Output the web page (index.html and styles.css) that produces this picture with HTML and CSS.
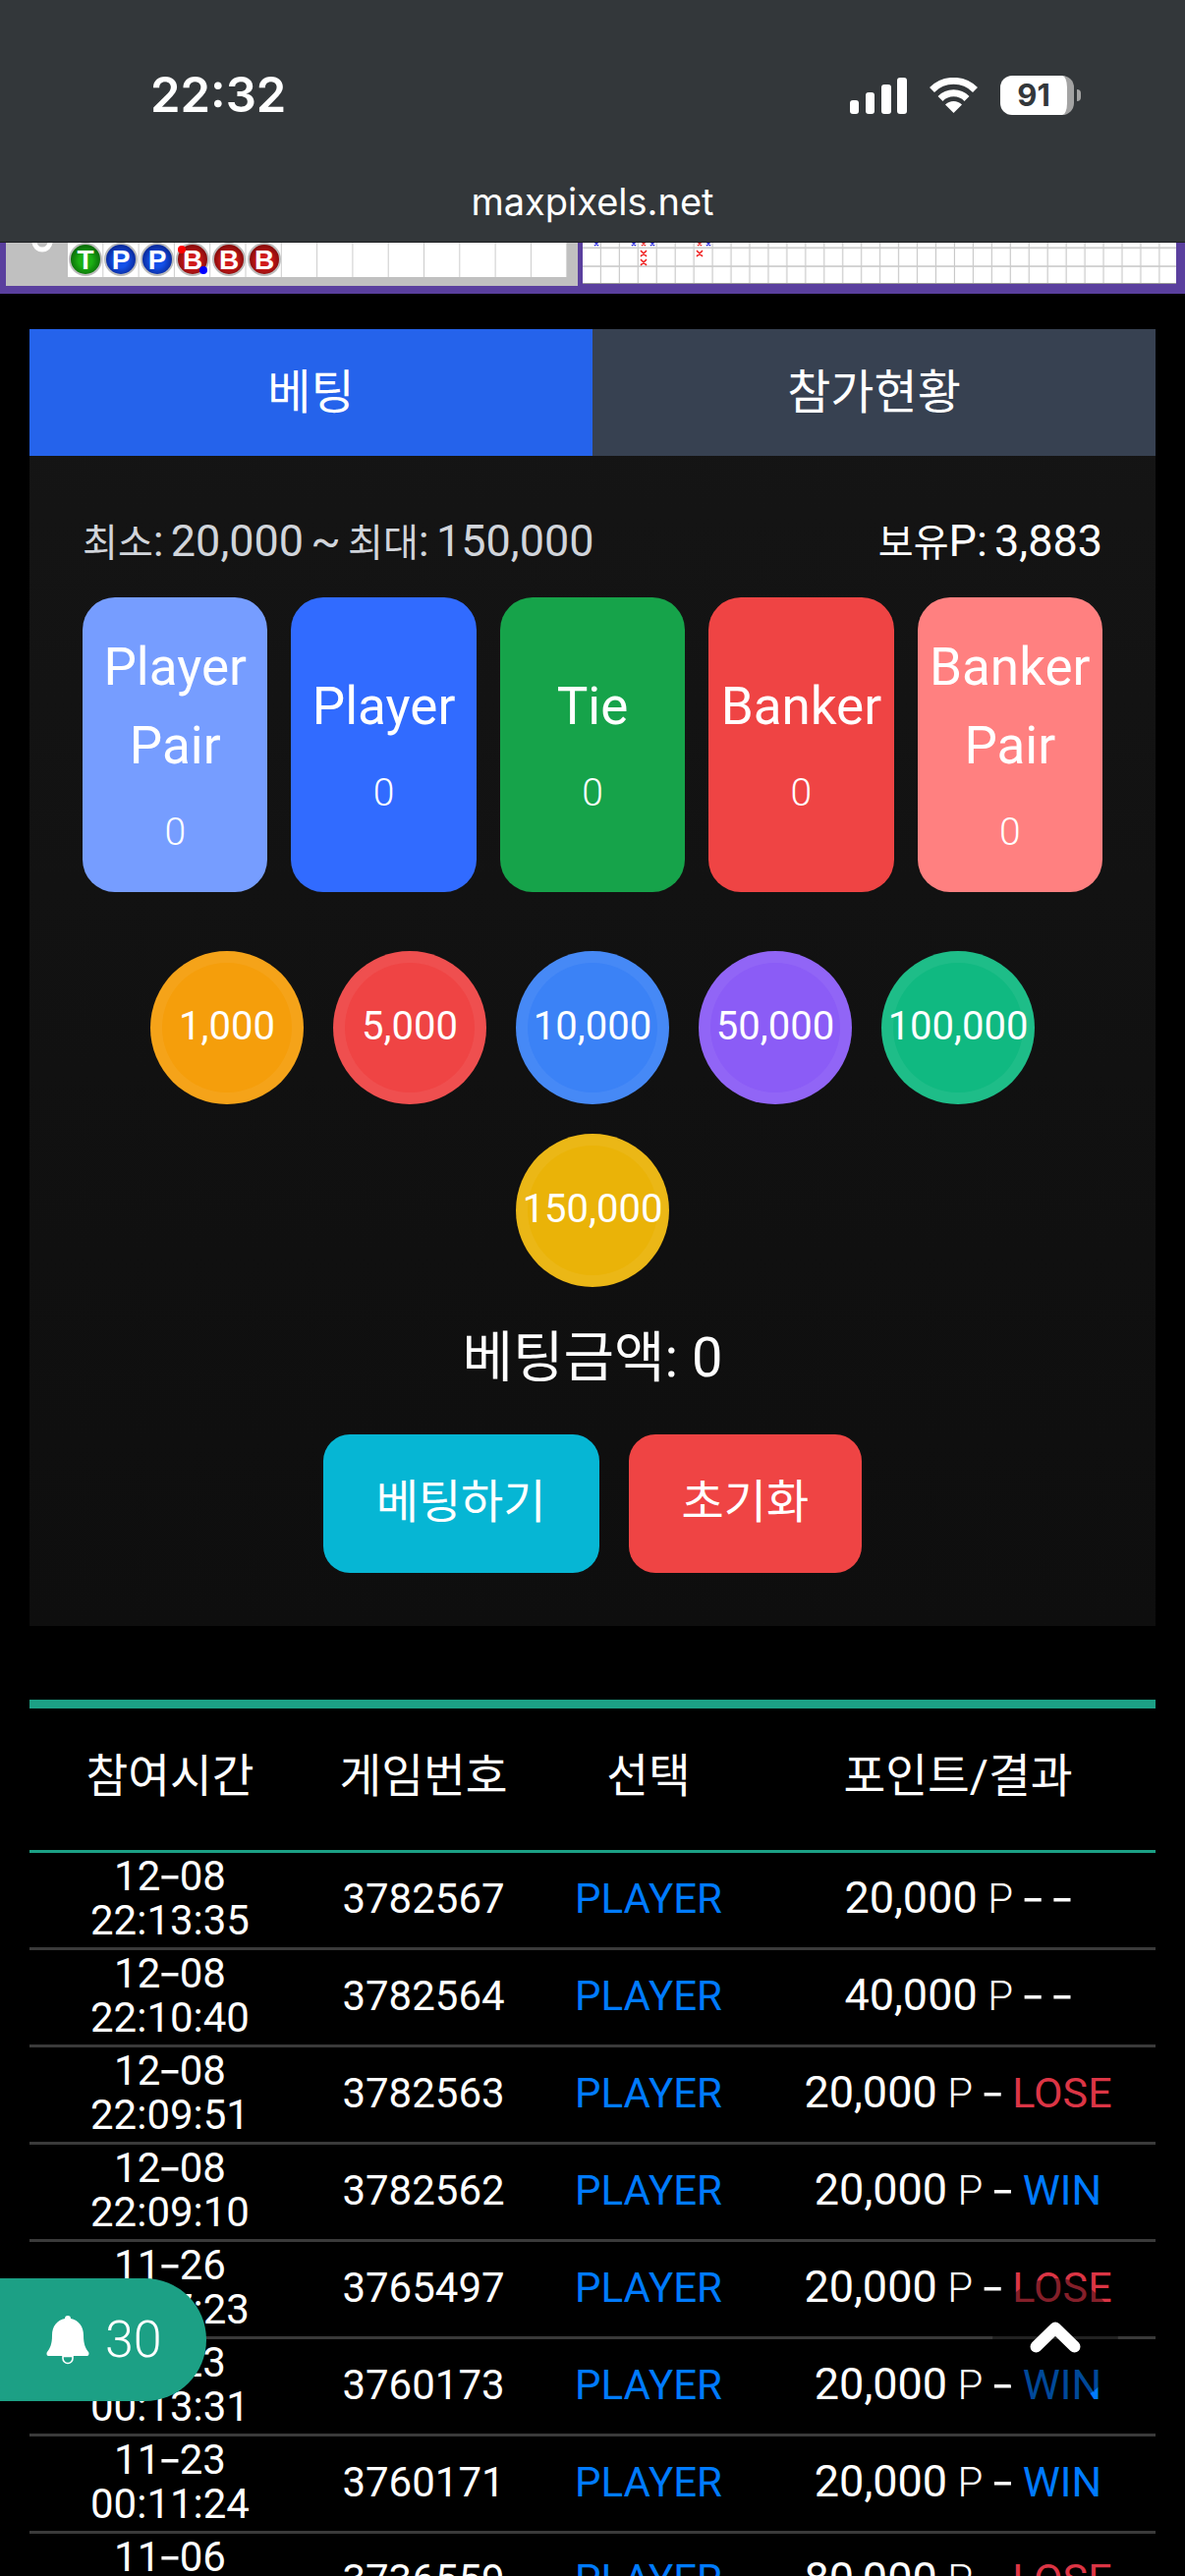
FILE: index.html
```html
<!DOCTYPE html>
<html lang="ko">
<head>
    <meta charset="UTF-8">
    <title>maxpixels.net</title>
    <link rel="stylesheet" href="styles.css">
</head>
<body>

    <div class="status">
        <div class="status-top">
            <span class="clock">22:32</span>
            <div class="status-icons">
                <svg class="signal" width="58" height="37" viewBox="0 0 58 37">
                    <rect x="0" y="23" width="9" height="14" rx="3" fill="#fff"/>
                    <rect x="16" y="15" width="9" height="22" rx="3" fill="#fff"/>
                    <rect x="32" y="7" width="10" height="30" rx="3" fill="#fff"/>
                    <rect x="48" y="0" width="10" height="37" rx="3" fill="#fff"/>
                </svg>
                <svg class="wifi" width="51" height="36" viewBox="0 0 51 36">
                    <path d="M3.5 12.5A31 31 0 0 1 47.5 12.5" fill="none" stroke="#fff" stroke-width="7"/>
                    <path d="M12 21.5A19 19 0 0 1 39 21.5" fill="none" stroke="#fff" stroke-width="7"/>
                    <path d="M25.5 36L17 27.5A12 12 0 0 1 34 27.5Z" fill="#fff"/>
                </svg>
                <div class="battery">
                    <div class="battery-body"><span>91</span></div>
                    <div class="battery-nub"></div>
                </div>
            </div>
        </div>
        <div class="url">maxpixels.net</div>
    </div>

    <!-- 게임 보드 (그림) -->
    <svg class="board" width="1206" height="52" viewBox="0 0 1206 52">
        <defs>
            <pattern id="leftcell" x="69" y="0" width="36.3" height="36" patternUnits="userSpaceOnUse">
                <rect width="36.3" height="36" fill="#fff"/>
                <rect x="35.3" width="1" height="36" fill="#ccc"/>
            </pattern>
            <pattern id="rightcell" x="593" y="-12.5" width="18.95" height="18.7" patternUnits="userSpaceOnUse">
                <rect width="18.95" height="18.7" fill="#fff"/>
                <rect x="17.8" width="1.2" height="18.7" fill="#c8c8c8"/>
                <rect y="17" width="18.95" height="1.7" fill="#ccc"/>
            </pattern>
            <radialGradient id="green" cy="0.55"><stop offset="0.45" stop-color="#1cb014"/><stop offset="1" stop-color="#0a7008"/></radialGradient>
            <radialGradient id="blue" cy="0.55"><stop offset="0.45" stop-color="#1450e8"/><stop offset="1" stop-color="#0a2ca0"/></radialGradient>
            <radialGradient id="red" cy="0.55"><stop offset="0.45" stop-color="#d01c1c"/><stop offset="1" stop-color="#8c0c0c"/></radialGradient>
        </defs>
        <rect width="1206" height="52" fill="#5a3f9e"/>
        <rect x="6" width="582" height="44" fill="#c0c0c0"/>
        <rect x="69" width="508" height="35" fill="url(#leftcell)"/>
        <rect x="593" width="604" height="42" fill="url(#rightcell)"/>
        <rect x="593" y="41" width="604" height="1" fill="#999"/>
        <circle cx="43" cy="-1" r="8" fill="none" stroke="#fff" stroke-width="5"/>

        <g fill="#bbb">
            <circle cx="87" cy="17" r="17"/>
            <circle cx="123" cy="17" r="17"/>
            <circle cx="160" cy="17" r="17"/>
            <circle cx="196" cy="17" r="17"/>
            <circle cx="233" cy="17" r="17"/>
            <circle cx="269" cy="17" r="17"/>
        </g>
        <circle cx="87" cy="17" r="15" fill="url(#green)"/>
        <circle cx="123" cy="17" r="15" fill="url(#blue)"/>
        <circle cx="160" cy="17" r="15" fill="url(#blue)"/>
        <circle cx="196" cy="17" r="15" fill="url(#red)"/>
        <circle cx="233" cy="17" r="15" fill="url(#red)"/>
        <circle cx="269" cy="17" r="15" fill="url(#red)"/>
        <g class="bead-text" text-anchor="middle" fill="#fff">
            <text x="87" y="27">T</text>
            <text x="123" y="27">P</text>
            <text x="160" y="27">P</text>
            <text x="196" y="27">B</text>
            <text x="233" y="27">B</text>
            <text x="269" y="27">B</text>
        </g>
        <circle cx="185" cy="7" r="4" fill="#f00"/>
        <circle cx="207" cy="28" r="4" fill="#00f"/>

        <g fill="none" stroke-width="1.6">
            <path d="M605 -1l4 4m0-4l-4 4M643 -1l4 4m0-4l-4 4M662 -1l4 4m0-4l-4 4M719 -1l4 4m0-4l-4 4" stroke="#2020e0"/>
            <path d="M653 -1l4 4m0-4l-4 4M710 -1l4 4m0-4l-4 4M652 8l6 6m0-6l-6 6M652 17l6 6m0-6l-6 6M709 8l6 6m0-6l-6 6" stroke="#f02020"/>
        </g>
    </svg>

    <div class="panel">
        <div class="tabs">
            <div class="tab active">베팅</div>
            <div class="tab">참가현황</div>
        </div>

        <div class="panel-body">
            <div class="limit">
                <span class="limit-range"><span class="ko">최소</span>: 20,000 ~ <span class="ko">최대</span>: 150,000</span>
                <span><span class="ko">보유</span>P: 3,883</span>
            </div>

            <div class="choices">
                <div class="choice c-ppair"><div class="choice-name">Player<br>Pair</div><div class="choice-val">0</div></div>
                <div class="choice c-player"><div class="choice-name">Player</div><div class="choice-val">0</div></div>
                <div class="choice c-tie"><div class="choice-name">Tie</div><div class="choice-val">0</div></div>
                <div class="choice c-banker"><div class="choice-name">Banker</div><div class="choice-val">0</div></div>
                <div class="choice c-bpair"><div class="choice-name">Banker<br>Pair</div><div class="choice-val">0</div></div>
            </div>

            <div class="chips">
                <div class="chip chip1">1,000</div>
                <div class="chip chip2">5,000</div>
                <div class="chip chip3">10,000</div>
                <div class="chip chip4">50,000</div>
                <div class="chip chip5">100,000</div>
                <div class="chip chip6">150,000</div>
            </div>

            <div class="total">베팅금액: 0</div>

            <div class="actions">
                <div class="btn btn-bet">베팅하기</div>
                <div class="btn btn-reset">초기화</div>
            </div>
        </div>
    </div>

    <table class="history">
        <colgroup>
            <col class="col-time">
            <col class="col-game">
            <col class="col-pick">
            <col class="col-result">
        </colgroup>
        <thead>
            <tr>
                <th>참여시간</th>
                <th>게임번호</th>
                <th>선택</th>
                <th>포인트/결과</th>
            </tr>
        </thead>
        <tbody>
            <tr>
                <td>12<s>-</s>08<br>22:13:35</td>
                <td>3782567</td>
                <td class="pick">PLAYER</td>
                <td><b>20,000</b> <i>P</i> <s>-</s> <s>-</s></td>
            </tr>
            <tr>
                <td>12<s>-</s>08<br>22:10:40</td>
                <td>3782564</td>
                <td class="pick">PLAYER</td>
                <td><b>40,000</b> <i>P</i> <s>-</s> <s>-</s></td>
            </tr>
            <tr>
                <td>12<s>-</s>08<br>22:09:51</td>
                <td>3782563</td>
                <td class="pick">PLAYER</td>
                <td><b>20,000</b> <i>P</i> <s>-</s> <span class="lose">LOSE</span></td>
            </tr>
            <tr>
                <td>12<s>-</s>08<br>22:09:10</td>
                <td>3782562</td>
                <td class="pick">PLAYER</td>
                <td><b>20,000</b> <i>P</i> <s>-</s> <span class="win">WIN</span></td>
            </tr>
            <tr>
                <td>11<s>-</s>26<br>00:27:23</td>
                <td>3765497</td>
                <td class="pick">PLAYER</td>
                <td><b>20,000</b> <i>P</i> <s>-</s> <span class="lose">LOSE</span></td>
            </tr>
            <tr>
                <td>11<s>-</s>23<br>00:13:31</td>
                <td>3760173</td>
                <td class="pick">PLAYER</td>
                <td><b>20,000</b> <i>P</i> <s>-</s> <span class="win">WIN</span></td>
            </tr>
            <tr>
                <td>11<s>-</s>23<br>00:11:24</td>
                <td>3760171</td>
                <td class="pick">PLAYER</td>
                <td><b>20,000</b> <i>P</i> <s>-</s> <span class="win">WIN</span></td>
            </tr>
            <tr>
                <td>11<s>-</s>06<br>21:40:12</td>
                <td>3736559</td>
                <td class="pick">PLAYER</td>
                <td><b>80,000</b> <i>P</i> <s>-</s> <span class="lose">LOSE</span></td>
            </tr>
        </tbody>
    </table>

    <div class="notice">
        <svg width="44" height="50" viewBox="0 0 44 50">
            <path d="M22 0c-2 0-3 1-3 3C11 4.500 6 11 6 20c0 9-2 13-5 17c-1 1.500-.5 4 1.500 4h39c2 0 2.500-2.500 1.500-4c-3-4-5-8-5-17C38 11 33 4.500 25 3c0-2-1-3-3-3z" fill="#fff"/>
            <path d="M17 41.500v2a5 5 0 0 0 10 0v-2z" fill="#1ca085" stroke="#fff" stroke-width="1.600"/>
        </svg>
        <span>30</span>
    </div>

    <div class="to-top">
        <svg width="52" height="34" viewBox="0 0 52 34">
            <path d="M6.500 27.500L26 8.500L45.500 27.500" fill="none" stroke="#fff" stroke-width="12" stroke-linecap="round" stroke-linejoin="round"/>
        </svg>
    </div>

</body>
</html>
```

FILE: styles.css
```css
html, body {
    margin: 0;
    height: 2622px;
    overflow: hidden;
    background: #000;
}

body {
    color: #fff;
    font-family: Roboto, "Noto Sans CJK KR", sans-serif;
    font-size: 42px;
}

/* status bar */
.status {
    height: 247px;
    box-sizing: border-box;
    background: #33373a;
    border-bottom: 1px solid #1c1e20;
}

.status-top {
    height: 177px;
    box-sizing: border-box;
    padding: 69px 106px 0 153px;
    display: flex;
    justify-content: space-between;
    align-items: flex-start;
}

.clock {
    font-family: Inter, sans-serif;
    font-size: 49px;
    font-weight: 600;
    line-height: 56px;
}

.status-icons {
    display: flex;
    align-items: flex-start;
    padding-top: 10px;
}

.wifi {
    margin-left: 22px;
}

.battery {
    margin-left: 22px;
    margin-top: -2px;
    display: flex;
    align-items: center;
}

.battery-body {
    width: 75px;
    height: 40px;
    box-sizing: border-box;
    border-radius: 12px;
    background: #fff;
    border-right: 7px solid #a3a3a3;
    color: #33373a;
    font-family: Inter, sans-serif;
    font-size: 31px;
    font-weight: 700;
    line-height: 40px;
    text-align: center;
}

.battery-nub {
    width: 4px;
    height: 12px;
    margin-left: 3px;
    border-radius: 0 4px 4px 0;
    background: #a3a3a3;
}

.url {
    font-family: Inter, sans-serif;
    font-size: 38px;
    line-height: 56px;
    text-align: center;
}

/* board */
.board {
    display: block;
}

.bead-text {
    font-family: "Liberation Sans", sans-serif;
    font-size: 28px;
    font-weight: 700;
}

/* panel */
.panel {
    margin: 36px 30px 0;
    background: linear-gradient(#151515, #0e0e0e);
}

.tabs {
    display: flex;
}

.tab {
    flex: 1;
    height: 129px;
    background: #374151;
    font-size: 48px;
    line-height: 130px;
    text-align: center;
}

.tab.active {
    background: #2563eb;
}

.panel-body {
    padding: 54px;
}

.limit {
    height: 66px;
    display: flex;
    justify-content: space-between;
    font-size: 45px;
    line-height: 66px;
    margin-bottom: 24px;
    word-spacing: -4px;
}

.ko {
    font-size: 39px;
    line-height: 1;
}

.limit-range {
    color: #d1d5db;
}

.choices {
    display: grid;
    grid-template-columns: repeat(5, 1fr);
    gap: 24px;
}

.choice {
    height: 300px;
    border-radius: 33px;
    display: flex;
    flex-direction: column;
    justify-content: center;
    text-align: center;
    font-size: 53px;
    line-height: 80px;
}

.choice-val {
    font-size: 39px;
    font-weight: 300;
    line-height: 60px;
    margin-top: 18px;
}

.c-ppair { background: #769dff; }
.c-player { background: #316bff; }
.c-tie { background: #16a34a; }
.c-banker { background: #ef4444; }
.c-bpair { background: #ff8080; }

.chips {
    margin-top: 60px;
    display: flex;
    flex-wrap: wrap;
    justify-content: center;
    gap: 30px;
}

.chip {
    width: 156px;
    height: 156px;
    box-sizing: border-box;
    border: 12px solid rgba(255, 255, 255, 0.06);
    border-radius: 50%;
    padding-bottom: 3px;
    font-size: 40px;
    display: flex;
    align-items: center;
    justify-content: center;
    white-space: nowrap;
}

.chip1 { background: #f59e0b; }
.chip2 { background: #ef4444; }
.chip3 { background: #3b82f6; }
.chip4 { background: #8b5cf6; }
.chip5 { background: #10b981; }
.chip6 { background: #eab308; }

.total {
    margin-top: 27px;
    font-size: 56px;
    line-height: 90px;
    text-align: center;
}

.actions {
    margin-top: 33px;
    display: flex;
    justify-content: center;
    gap: 30px;
}

.btn {
    height: 141px;
    padding: 0 54px;
    border-radius: 27px;
    font-size: 47px;
    line-height: 137px;
}

.btn-bet { background: #06b6d4; }
.btn-reset { background: #ef4444; }

/* history table */
.history {
    width: 1146px;
    margin: 75px 30px 0;
    border-collapse: collapse;
    table-layout: fixed;
    border-top: 9px solid #1ca085;
}

.col-time { width: 286px; }
.col-game { width: 230px; }
.col-pick { width: 228px; }
.col-result { width: 402px; }

.history th {
    height: 128px;
    padding: 0 0 16px;
    border-bottom: 3px solid #1ca085;
    font-size: 46.5px;
    font-weight: 400;
}

.history td {
    height: 92px;
    padding: 0 0 4px;
    border-bottom: 3px solid #3a3a3a;
    line-height: 45px;
    text-align: center;
}

.history b {
    font-size: 45px;
    font-weight: 400;
    line-height: 1px;
}

.history i {
    font-style: normal;
    font-weight: 300;
}

/* 하이픈이 좁아서 따로 */
.history s {
    font-family: Inter, sans-serif;
    font-size: 56px;
    font-weight: 300;
    line-height: 1px;
    vertical-align: -4px;
    margin: 0 -3px;
    text-decoration: none;
}

.pick, .win {
    color: #007bff;
}

.lose {
    color: #dc3545;
}

.win, .lose {
    font-size: 43px;
    line-height: 1px;
}

/* floating */
.notice {
    position: fixed;
    left: 0;
    top: 2319px;
    width: 210px;
    height: 125px;
    box-sizing: border-box;
    padding-left: 47px;
    border-radius: 0 63px 63px 0;
    background: #1ca085;
    display: flex;
    align-items: center;
    gap: 16px;
    font-size: 52px;
    font-weight: 300;
}

.to-top {
    position: fixed;
    left: 1010px;
    top: 2319px;
    width: 128px;
    height: 128px;
    border-radius: 50%;
    background: rgba(0, 0, 0, 0.4);
    display: flex;
    justify-content: center;
    padding-top: 42px;
    box-sizing: border-box;
}
```
